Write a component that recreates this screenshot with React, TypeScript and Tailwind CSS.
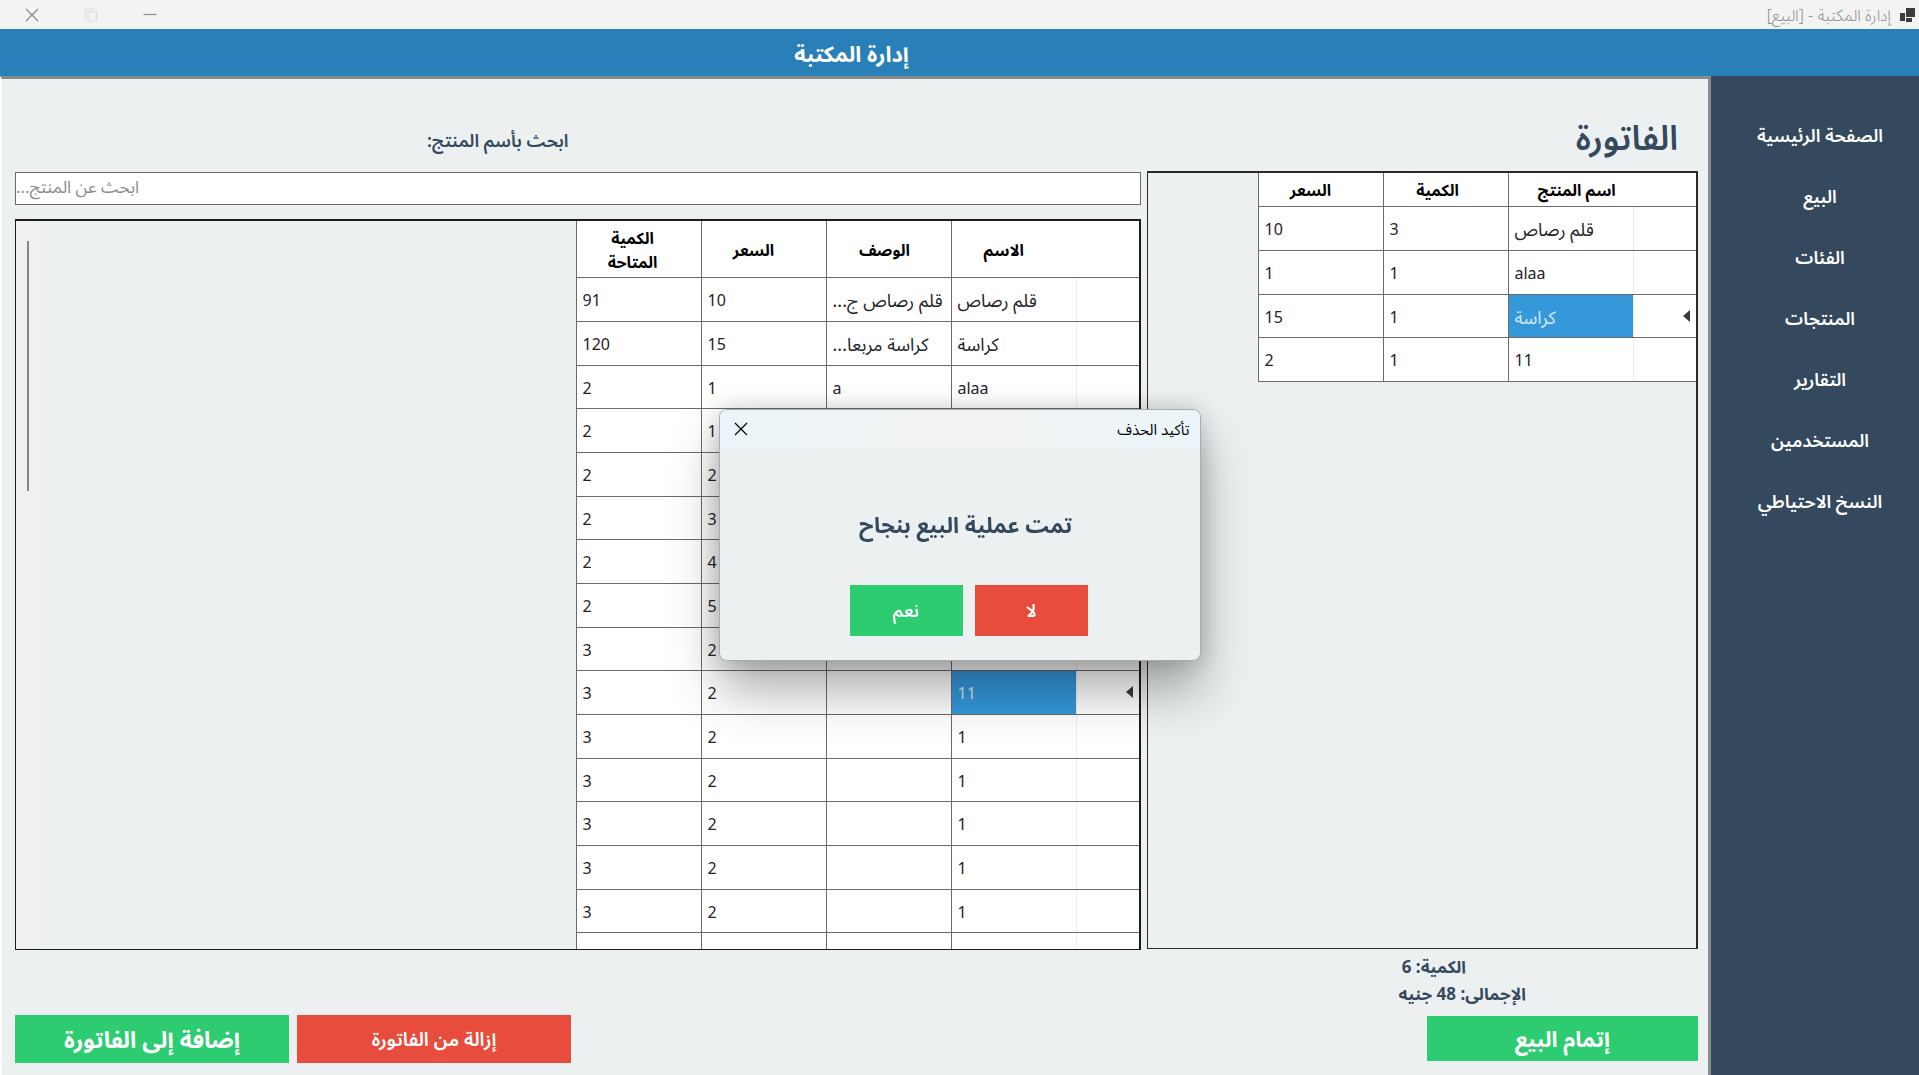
import type { ReactNode } from "react";

type Column = { label: string; className: string };
type Row = { cells: string[]; selected?: boolean };

const navItems = [
  "الصفحة الرئيسية",
  "البيع",
  "الفئات",
  "المنتجات",
  "التقارير",
  "المستخدمين",
  "النسخ الاحتياطي",
];

const invoiceColumns: Column[] = [
  { label: "اسم المنتج", className: "pl-3" },
  { label: "الكمية", className: "pr-4" },
  { label: "السعر", className: "pr-5" },
];

const invoiceRows: Row[] = [
  { cells: ["قلم رصاص", "3", "10"] },
  { cells: ["alaa", "1", "1"] },
  { cells: ["كراسة", "1", "15"], selected: true },
  { cells: ["11", "1", "2"] },
];

const productColumns: Column[] = [
  { label: "الاسم", className: "pr-5" },
  { label: "الوصف", className: "pr-2" },
  { label: "السعر", className: "pr-5" },
  { label: "الكمية المتاحة", className: "pr-8 pl-5" },
];

const productRows: Row[] = [
  { cells: ["قلم رصاص", "قلم رصاص ج...", "10", "91"] },
  { cells: ["كراسة", "كراسة مربعا...", "15", "120"] },
  { cells: ["alaa", "a", "1", "2"] },
  { cells: ["1", "", "1", "2"] },
  { cells: ["1", "", "2", "2"] },
  { cells: ["1", "", "3", "2"] },
  { cells: ["1", "", "4", "2"] },
  { cells: ["1", "", "5", "2"] },
  { cells: ["1", "", "2", "3"] },
  { cells: ["11", "", "2", "3"], selected: true },
  { cells: ["1", "", "2", "3"] },
  { cells: ["1", "", "2", "3"] },
  { cells: ["1", "", "2", "3"] },
  { cells: ["1", "", "2", "3"] },
  { cells: ["1", "", "2", "3"] },
  { cells: ["", "", "", ""] },
];

const isArabic = (text: string) => /[\u0600-\u06ff]/.test(text);

function CloseIcon() {
  return (
    <svg width="14" height="14" viewBox="0 0 14 14" fill="none" stroke="currentColor" strokeWidth="1.2">
      <path d="M1 1l12 12M13 1L1 13" />
    </svg>
  );
}

function AppIcon() {
  return (
    <svg width="16" height="16" viewBox="0 0 16 16" fill="#3c3c3c">
      <rect x="7" y="1" width="9" height="9" />
      <rect x="1" y="6" width="5" height="8" />
      <rect x="7" y="11" width="6" height="4" />
    </svg>
  );
}

function TitleBar() {
  return (
    <div className="flex h-[29px] shrink-0 items-center justify-between bg-[#f3f3f3] pr-1 pl-6 text-[#8a8a8a]">
      <div className="flex items-center gap-2">
        <AppIcon />
        <span className="text-[16px] leading-5 font-light">إدارة المكتبة - [البيع]</span>
      </div>
      <div className="flex items-center gap-[43px]">
        <button aria-label="تصغير" className="flex w-4 justify-center">
          <svg width="14" height="14" viewBox="0 0 14 14" stroke="currentColor" strokeWidth="1.2">
            <path d="M0.5 6.5h13" />
          </svg>
        </button>
        <button aria-label="استعادة" disabled className="flex w-4 justify-center text-[#dcdcdc]">
          <svg width="14" height="14" viewBox="0 0 14 14" fill="none" stroke="currentColor" strokeWidth="1.2">
            <rect x="4" y="3.5" width="8.5" height="9.5" rx="1.5" />
            <path d="M1.5 9.5V3a2 2 0 0 1 2-2H10" />
          </svg>
        </button>
        <button aria-label="إغلاق" className="flex w-4 justify-center">
          <CloseIcon />
        </button>
      </div>
    </div>
  );
}

function DataTable({
  label,
  columns,
  rows,
  headClass,
}: {
  label: string;
  columns: Column[];
  rows: Row[];
  headClass: string;
}) {
  return (
    <table aria-label={label} className="table-fixed border-collapse bg-white text-black">
      <colgroup>
        <col className="w-[63px]" />
        {columns.map((c) => (
          <col key={c.label} className="w-[125px]" />
        ))}
      </colgroup>
      <thead>
        <tr className={headClass}>
          <th />
          {columns.map((c) => (
            <th
              key={c.label}
              scope="col"
              className={`border-b border-l border-[#6b6b6b] pt-0.5 text-center text-[16px] leading-6 font-bold ${c.className}`}
            >
              {c.label}
            </th>
          ))}
        </tr>
      </thead>
      <tbody className="leading-6 text-[#1f2328]">
        {rows.map((row, r) => (
          <tr key={r} className="h-11 nth-[3n]:h-[43px]">
            <td className="border-y border-l border-y-[#6b6b6b] border-l-[#ececec] pr-1.5">
              {row.selected && (
                <svg width="7" height="12" viewBox="0 0 7 12" fill="#3a3a3a" role="img" aria-label="الصف الحالي">
                  <path d="M7 0v12L0 6z" />
                </svg>
              )}
            </td>
            {row.cells.map((cell, c) => (
              <td
                key={c}
                className={`overflow-hidden border-b border-l border-[#6b6b6b] pt-0.5 pl-1.5 text-left whitespace-nowrap ${
                  isArabic(cell) ? "text-[18px]" : "text-[16px]"
                } ${row.selected && c === 0 ? "bg-[#3498db] text-[#d6eaf8]" : ""}`}
              >
                {cell}
              </td>
            ))}
          </tr>
        ))}
      </tbody>
    </table>
  );
}

function ActionButton({ className, children }: { className: string; children: ReactNode }) {
  return <button className={`flex items-center justify-center text-white ${className}`}>{children}</button>;
}

function InvoicePanel() {
  return (
    <section className="flex w-[551px] shrink-0 flex-col">
      <h2 className="flex h-[92px] shrink-0 items-center pt-6 pr-5 text-[34px] leading-10 font-semibold">الفاتورة</h2>
      <div className="min-h-0 flex-1 overflow-hidden border border-t-2 border-r-2 border-[#2a2a2a]">
        <DataTable label="الفاتورة" columns={invoiceColumns} rows={invoiceRows} headClass="h-[33px]" />
      </div>
      <div className="flex h-[126px] shrink-0 flex-col">
        <div className="flex flex-col items-start pt-1 pr-[172px] text-[17px] leading-[27px] font-bold">
          <p className="pr-[60px]">الكمية: 6</p>
          <p>الإجمالى: 48 جنيه</p>
        </div>
        <ActionButton className="mt-[9px] h-[45px] w-[271px] bg-[#2ecc71] text-[22px] font-bold">إتمام البيع</ActionButton>
      </div>
    </section>
  );
}

function ProductsPanel() {
  return (
    <section className="flex min-w-0 flex-1 flex-col">
      <label htmlFor="search" className="flex h-[93px] shrink-0 items-center justify-end pt-[30px] pl-[412px] text-[18px] font-semibold">
        ابحث بأسم المنتج:
      </label>
      <input
        id="search"
        type="text"
        placeholder="ابحث عن المنتج..."
        className="h-[33px] w-full shrink-0 rounded-none border border-[#6b6b6b] bg-white pb-1 text-left text-[17px] outline-none placeholder:text-[#8c8c8c]"
      />
      <div className="mt-3.5 flex min-h-0 flex-1 justify-between overflow-hidden border border-t-2 border-r-2 border-[#1c1c1c]">
        <DataTable label="المنتجات" columns={productColumns} rows={productRows} headClass="h-[56px]" />
        <div className="w-[22px] bg-[#f0f0f0] pt-5">
          <div className="mr-[9px] h-[250px] w-[2px] bg-[#868686]" />
        </div>
      </div>
      <div className="flex h-[125px] shrink-0 items-end justify-end gap-2 pb-3">
        <ActionButton className="h-12 w-[274px] bg-[#e74c3c] text-[19px] font-semibold">إزالة من الفاتورة</ActionButton>
        <ActionButton className="h-12 w-[274px] bg-[#2ecc71] text-[23px] font-bold">إضافة إلى الفاتورة</ActionButton>
      </div>
    </section>
  );
}

function ConfirmDialog() {
  return (
    <div
      role="dialog"
      aria-labelledby="dialog-title"
      className="fixed top-[409px] left-1/2 flex h-[252px] w-[482px] -translate-x-1/2 flex-col overflow-hidden rounded-lg border border-[#a9adaf] bg-[#ecf0f1] shadow-[0_30px_50px_rgba(0,0,0,0.32),0_0_24px_rgba(0,0,0,0.18)]"
    >
      <div className="flex h-[38px] shrink-0 items-center justify-between bg-linear-to-r from-[#ebf5f9] via-[#f3f3f3] to-[#ebf5f9] pr-2.5 pl-3.5 text-black">
        <h2 id="dialog-title" className="text-[15px] leading-5">
          تأكيد الحذف
        </h2>
        <button aria-label="إغلاق">
          <CloseIcon />
        </button>
      </div>
      <p className="mt-14 pl-3 text-center text-[22px] leading-10 font-bold">تمت عملية البيع بنجاح</p>
      <div className="mt-[41px] flex justify-center gap-3 pl-[18px]">
        <ActionButton className="h-[51px] w-[113px] bg-[#e74c3c] text-[18px] font-semibold">لا</ActionButton>
        <ActionButton className="h-[51px] w-[113px] bg-[#2ecc71] text-[18px] font-semibold">نعم</ActionButton>
      </div>
    </div>
  );
}

export default function App() {
  return (
    <div
      dir="rtl"
      className="flex h-screen flex-col overflow-hidden bg-[#ecf0f1] font-['Noto_Sans','Noto_Sans_Arabic','DejaVu_Sans',sans-serif] text-[#34495e]"
    >
      <TitleBar />
      <header className="flex h-[47px] shrink-0 items-center justify-center bg-[#2980b9] pr-[216px]">
        <h1 className="text-[22px] leading-8 font-bold text-white">إدارة المكتبة</h1>
      </header>
      <div className="flex min-h-0 flex-1">
        <nav className="flex w-[208px] shrink-0 flex-col bg-[#34495e] pt-[29px]">
          {navItems.map((item) => (
            <a key={item} href="#" className="flex h-[61px] items-center justify-center pl-2.5 text-[18px] font-semibold text-white">
              {item}
            </a>
          ))}
        </nav>
        <main className="flex min-w-0 flex-1 gap-1.5 border-t-3 border-r-3 border-l-2 border-t-[#868b8d] border-r-[#868b8d] border-l-white pr-[10px] pl-[13px]">
          <InvoicePanel />
          <ProductsPanel />
        </main>
      </div>
      <ConfirmDialog />
    </div>
  );
}
